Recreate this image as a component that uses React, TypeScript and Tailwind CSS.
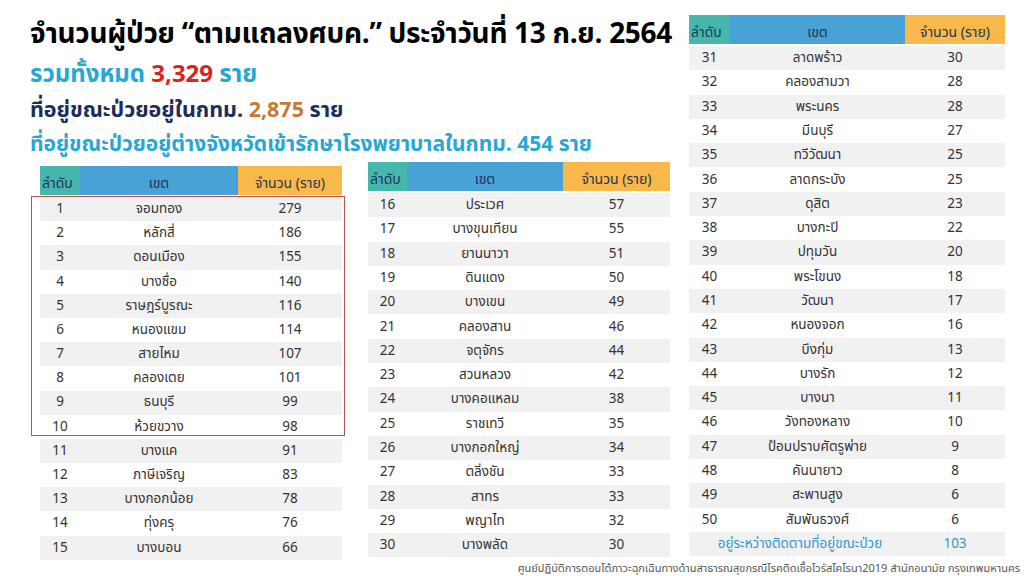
const t1 = [
  ["1", "จอมทอง", "279"],
  ["2", "หลักสี่", "186"],
  ["3", "ดอนเมือง", "155"],
  ["4", "บางซื่อ", "140"],
  ["5", "ราษฎร์บูรณะ", "116"],
  ["6", "หนองแขม", "114"],
  ["7", "สายไหม", "107"],
  ["8", "คลองเตย", "101"],
  ["9", "ธนบุรี", "99"],
  ["10", "ห้วยขวาง", "98"],
  ["11", "บางแค", "91"],
  ["12", "ภาษีเจริญ", "83"],
  ["13", "บางกอกน้อย", "78"],
  ["14", "ทุ่งครุ", "76"],
  ["15", "บางบอน", "66"],
];

const t2 = [
  ["16", "ประเวศ", "57"],
  ["17", "บางขุนเทียน", "55"],
  ["18", "ยานนาวา", "51"],
  ["19", "ดินแดง", "50"],
  ["20", "บางเขน", "49"],
  ["21", "คลองสาน", "46"],
  ["22", "จตุจักร", "44"],
  ["23", "สวนหลวง", "42"],
  ["24", "บางคอแหลม", "38"],
  ["25", "ราชเทวี", "35"],
  ["26", "บางกอกใหญ่", "34"],
  ["27", "ตลิ่งชัน", "33"],
  ["28", "สาทร", "33"],
  ["29", "พญาไท", "32"],
  ["30", "บางพลัด", "30"],
];

const t3 = [
  ["31", "ลาดพร้าว", "30"],
  ["32", "คลองสามวา", "28"],
  ["33", "พระนคร", "28"],
  ["34", "มีนบุรี", "27"],
  ["35", "ทวีวัฒนา", "25"],
  ["36", "ลาดกระบัง", "25"],
  ["37", "ดุสิต", "23"],
  ["38", "บางกะปิ", "22"],
  ["39", "ปทุมวัน", "20"],
  ["40", "พระโขนง", "18"],
  ["41", "วัฒนา", "17"],
  ["42", "หนองจอก", "16"],
  ["43", "บึงกุ่ม", "13"],
  ["44", "บางรัก", "12"],
  ["45", "บางนา", "11"],
  ["46", "วังทองหลาง", "10"],
  ["47", "ป้อมปราบศัตรูพ่าย", "9"],
  ["48", "คันนายาว", "8"],
  ["49", "สะพานสูง", "6"],
  ["50", "สัมพันธวงศ์", "6"],
];

const Table = (props: any) => {
  const [c1, c2, c3] = props.cols;
  return (
    <div className="flex flex-col">
      <div className="flex h-[29px] items-end text-[14px] text-[#1e3556]">
        <div className="bg-[#45b7ad] h-full flex items-end pl-[2px] pb-[1px]" style={{ width: c1 }}>
          ลำดับ
        </div>
        <div className="bg-[#48a2d6] h-full flex items-end justify-center pb-[1px]" style={{ width: c2 }}>
          เขต
        </div>
        <div className="bg-[#f8b84a] h-full flex items-end justify-center pb-[1px]" style={{ width: c3 }}>
          จำนวน (ราย)
        </div>
      </div>
      <div className="relative mt-[2px]">
        {props.rows.map((r: string[], i: number) => (
          <div
            key={r[0]}
            className={
              "flex items-center text-[13.5px] text-[#333333] " +
              (i % 2 === 0 ? "bg-[#f1f1f1]" : "bg-white")
            }
            style={{ height: props.rowH }}
          >
            <div className="text-center" style={{ width: c1 }}>{r[0]}</div>
            <div className="text-center" style={{ width: c2 }}>{r[1]}</div>
            <div className="text-center" style={{ width: c3 }}>{r[2]}</div>
          </div>
        ))}
        {props.extra && (
          <div
            className="flex items-center text-[13.5px] text-[#2f9ad4] bg-[#f1f1f1]"
            style={{ height: props.rowH }}
          >
            <div className="whitespace-nowrap text-center pl-[6px]" style={{ width: c1 + c2 }}>
              อยู่ระหว่างติดตามที่อยู่ขณะป่วย
            </div>
            <div className="text-center" style={{ width: c3 }}>103</div>
          </div>
        )}
        {props.box && (
          <div className="absolute left-[-9px] top-[-1px] w-[314px] h-[240px] border border-[#c0504d]" />
        )}
      </div>
    </div>
  );
}

export default function App() {
  return (
    <div
      className="w-[1024px] h-[576px] bg-white overflow-hidden flex flex-col"
      style={{ fontFamily: "Tahoma, 'Noto Sans Thai', 'Noto Sans', 'DejaVu Sans', sans-serif" }}
    >
      <div className="flex">
        <div className="flex flex-col pl-[30px] w-[689px]">
          <div className="mt-[17px] h-[36px] text-[28px] font-bold text-black leading-[36px] whitespace-nowrap tracking-[-0.3px]">
            จำนวนผู้ป่วย “ตามแถลงศบค.” ประจำวันที่ 13 ก.ย. 2564
          </div>
          <div className="mt-[5px] h-[35px] text-[24px] font-bold leading-[35px] text-[#26a7d6] whitespace-nowrap">
            รวมทั้งหมด <span className="text-[#e0201b]">3,329</span> ราย
          </div>
          <div className="h-[35px] text-[21.5px] font-bold leading-[35px] text-[#1b2d5c] whitespace-nowrap">
            ที่อยู่ขณะป่วยอยู่ในกทม. <span className="text-[#c87932]">2,875</span> ราย
          </div>
          <div className="h-[34px] text-[21px] font-bold leading-[34px] text-[#26a7d6] whitespace-nowrap">
            ที่อยู่ขณะป่วยอยู่ต่างจังหวัดเข้ารักษาโรงพยาบาลในกทม. 454 ราย
          </div>
          <div className="flex items-start">
            <div className="ml-[10px] mt-[4px]">
              <Table cols={[40, 158, 104]} rows={t1} rowH={24.2} box />
            </div>
            <div className="ml-[26px]">
              <Table cols={[39, 156, 107]} rows={t2} rowH={24.3} />
            </div>
          </div>
        </div>
        <div className="pt-[15px]">
          <Table cols={[41, 175, 100]} rows={t3} rowH={24.3} extra />
        </div>
      </div>
      <div className="text-right pr-[4px] text-[11px] text-[#555555] whitespace-nowrap mt-[1px]">
        ศูนย์ปฏิบัติการตอบโต้ภาวะฉุกเฉินทางด้านสาธารณสุขกรณีโรคติดเชื้อไวรัสโคโรนา2019 สำนักอนามัย กรุงเทพมหานคร
      </div>
    </div>
  );
}
